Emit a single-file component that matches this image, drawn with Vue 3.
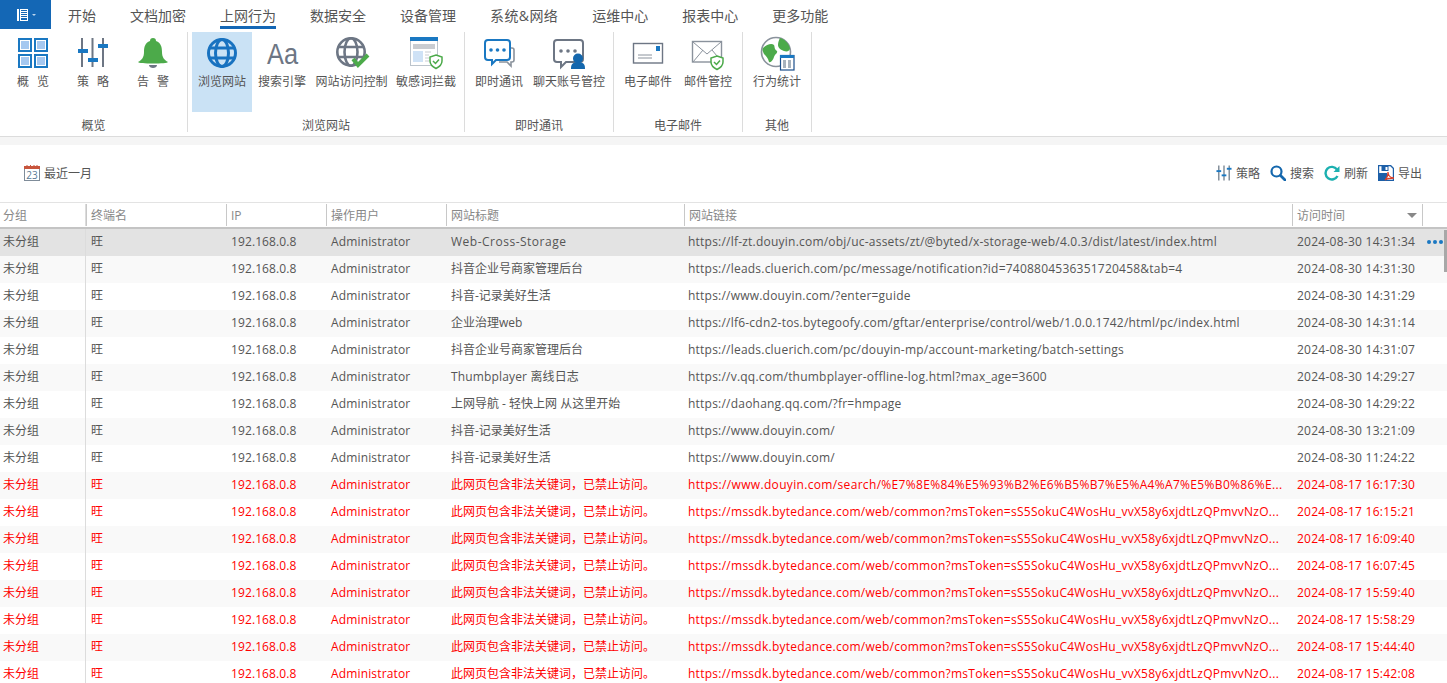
<template>
  <div class="app">
    <!-- top tabs -->
    <div class="tabs">
      <div class="file-btn">
        <svg width="14" height="14" viewBox="0 0 14 14" fill="#fff">
          <rect x="1" y="1" width="2" height="12" />
          <rect x="4.500" y="1.500" width="7" height="11" fill="none" stroke="#fff" />
          <path d="M5 3.500h6M5 5.500h6M5 7.500h6M5 9.500h6" stroke="#fff" />
        </svg>
        <span class="caret"></span>
      </div>
      <div
        v-for="t in tabs"
        :key="t"
        class="tab"
        :class="{ active: t === '上网行为', amp: t.includes('&') }"
      >
        <span>{{ t }}</span>
      </div>
    </div>

    <!-- ribbon -->
    <div class="ribbon">
      <div v-for="g in groups" :key="g.title" class="group" :style="{ width: g.width + 'px' }">
        <div class="group-items">
          <div
            v-for="it in g.items"
            :key="it.label"
            class="rb-item"
            :class="{ selected: it.selected }"
            :style="{ width: it.w + 'px' }"
          >
            <div class="rb-icon">
              <svg width="36" height="36" viewBox="0 0 36 36" overflow="visible" v-html="icons[it.icon]"></svg>
            </div>
            <div class="rb-label">{{ it.label }}</div>
          </div>
        </div>
        <div class="group-title">{{ g.title }}</div>
      </div>
    </div>
    <div class="ribbon-gap"></div>

    <!-- toolbar -->
    <div class="toolbar">
      <div class="date-range">
        <svg width="16" height="16" viewBox="0 0 16 16">
          <rect x="0.500" y="2.500" width="15" height="13" fill="#fff" stroke="#7f8c99" />
          <rect x="0" y="1" width="16" height="3" fill="#c8553d" />
          <path d="M3 0v3M6.500 0v3M10 0v3M13 0v3" stroke="#c8553d" />
          <text x="8" y="14" text-anchor="middle" class="cal-text">23</text>
        </svg>
        <span>最近一月</span>
      </div>
      <div class="actions">
        <div class="action">
          <svg width="16" height="18" viewBox="0 0 17 18" fill="#1a78c2">
            <path d="M3 1v16M8.500 1v16M14 1v16" stroke="#5c6b7a" stroke-width="1.200" />
            <rect x="0.500" y="6" width="5" height="2" /><rect x="6" y="10.500" width="5" height="2" /><rect x="11.500" y="3.500" width="5" height="2" />
          </svg>
          <span>策略</span>
        </div>
        <div class="action">
          <svg width="16" height="16" viewBox="0 0 16 16" fill="none" stroke="#1467ad" stroke-width="2.200">
            <circle cx="6.500" cy="6.500" r="5" /><path d="M10.500 10.500l4.500 4.500" stroke-linecap="round" stroke-width="2.800" />
          </svg>
          <span>搜索</span>
        </div>
        <div class="action">
          <svg width="16" height="16" viewBox="0 0 16 16" fill="none">
            <path d="M13.500 11a6.300 6.300 0 1 1 -0.500-6.500" stroke="#1cb0b0" stroke-width="2.400" />
            <path d="M15.500 1v6h-6z" fill="#1cb0b0" />
          </svg>
          <span>刷新</span>
        </div>
        <div class="action">
          <svg width="16" height="16" viewBox="0 0 16 16">
            <path d="M0.500 0.500h12l3 3v12h-15z" fill="#fff" stroke="#1c5fa8" stroke-width="1.400" />
            <rect x="3.500" y="1" width="7" height="5" fill="#1c5fa8" /><rect x="7.500" y="2" width="2" height="3" fill="#fff" />
            <rect x="1" y="8" width="8" height="7" fill="#1c5fa8" />
            <path d="M7 15c3-3 3-6 3-8 0 3 2 6 6 6-3 0-6 0-9 2z" fill="none" stroke="#d8402b" stroke-width="1.300" />
          </svg>
          <span>导出</span>
        </div>
      </div>
    </div>

    <!-- table -->
    <div class="table">
      <div class="row head">
        <div v-for="c in columns" :key="c.key" class="cell" :class="c.key" >
          <span>{{ c.label }}</span>
          <i v-if="c.key === 'time'" class="sort"></i>
        </div>
        <div class="cell extra"></div>
      </div>
      <div
        v-for="(r, i) in rows"
        :key="i"
        class="row"
        :class="{ odd: i % 2 === 1, current: i === 0, blocked: r.blocked }"
      >
        <div
          v-for="c in columns"
          :key="c.key"
          class="cell"
          :class="[c.key, cellClass(c.key, r)]"
        >{{ r[c.key] }}</div>
        <div v-if="i === 0" class="more"><b></b><b></b><b></b></div>
      </div>
      <div class="scroll-thumb"></div>
    </div>
  </div>
</template>

<script setup>
const tabs = ['开始', '文档加密', '上网行为', '数据安全', '设备管理', '系统&网络', '运维中心', '报表中心', '更多功能']

const groups = [
  {
    title: '概览', width: 188,
    items: [
      { label: '概 览', w: 60, icon: 'overview' },
      { label: '策 略', w: 60, icon: 'policy' },
      { label: '告 警', w: 60, icon: 'alarm' }
    ]
  },
  {
    title: '浏览网站', width: 277,
    items: [
      { label: '浏览网站', w: 60, icon: 'globe', selected: true },
      { label: '搜索引擎', w: 60, icon: 'font' },
      { label: '网站访问控制', w: 79, icon: 'globeCheck' },
      { label: '敏感词拦截', w: 70, icon: 'page' }
    ]
  },
  {
    title: '即时通讯', width: 149,
    items: [
      { label: '即时通讯', w: 60, icon: 'chat' },
      { label: '聊天账号管控', w: 80, icon: 'chatUser' }
    ]
  },
  {
    title: '电子邮件', width: 129,
    items: [
      { label: '电子邮件', w: 60, icon: 'mail' },
      { label: '邮件管控', w: 60, icon: 'mailShield' }
    ]
  },
  {
    title: '其他', width: 69,
    items: [{ label: '行为统计', w: 60, icon: 'earth' }]
  }
]

const shield = (x, y, c) =>
  `<path d="M${x} ${y}l6 2v4c0 4-3 6-6 7.500-3-1.500-6-3.500-6-7.500v-4z" fill="#fff" stroke="${c}" stroke-width="1.500"/><path d="M${x - 3} ${y + 6}l2.500 2.500 3.500-4" fill="none" stroke="${c}" stroke-width="1.500"/>`

const tile = (x, y) =>
  `<rect x="${x}" y="${y}" width="12" height="12" fill="#fff" stroke="#1a78c2" stroke-width="2"/><rect x="${x + 2}" y="${y + 2}" width="8" height="8" fill="#a5c8f0"/>`

const icons = {
  overview: tile(4, 3) + tile(20, 3) + tile(4, 19) + tile(20, 19),
  policy:
    '<path d="M7 2v29M17.500 2v29M28 2v29" stroke="#6d7684" stroke-width="2"/><g fill="#1a78c2"><rect x="3" y="13" width="10" height="4"/><rect x="13" y="22" width="10" height="4"/><rect x="23" y="8" width="10" height="4"/></g>',
  alarm:
    '<path d="M18 2c2 0 3 1 3 3 5 2 6 6 6 11 0 5 2 8 6 10 0 2-30 2-30 0 4-2 6-5 6-10 0-5 1-9 6-11 0-2 1-3 3-3z" fill="#4caa4a"/><path d="M14 29h8c0 4-8 4-8 0z" fill="#6d7684"/>',
  globe:
    '<g fill="none" stroke="#1872c0" stroke-width="3"><circle cx="18" cy="17" r="13.500"/><ellipse cx="18" cy="17" rx="6.500" ry="13.500"/><path d="M5 12h26M5 22h26"/></g>',
  font:
    '<text x="3" y="28" font-size="29" textLength="31" lengthAdjust="spacingAndGlyphs" fill="#6d7684" font-family="Liberation Sans, sans-serif">Aa</text>',
  globeCheck:
    '<g fill="none" stroke="#6d7684" stroke-width="2.600"><circle cx="17" cy="16" r="13.700"/><ellipse cx="17" cy="16" rx="6.500" ry="13.700"/><path d="M4 11h26M4 21h26"/></g><path d="M19 23l5 6 10-10" fill="none" stroke="#4caa4a" stroke-width="4"/>',
  page:
    '<rect x="2.500" y="1.500" width="27" height="28" fill="#fff" stroke="#bcc4cc"/><rect x="2" y="1" width="28" height="4" fill="#1a78c2"/><rect x="5" y="8" width="22" height="5" fill="#c9ccd1"/><rect x="5" y="15" width="10" height="11" fill="#cfe2f6"/><path d="M17 16h6M17 19h4M17 22h4M17 25h4" stroke="#c9ccd1"/>' + shield(28, 19, '#4caa4a'),
  chat:
    '<path d="M7 4h19a3 3 0 0 1 3 3v14a3 3 0 0 1-3 3H15l-4 4v-4H7a3 3 0 0 1-3-3V7a3 3 0 0 1 3-3z" fill="#fff" stroke="#1a78c2" stroke-width="2"/><path d="M30 12h1a2 2 0 0 1 2 2v10a2 2 0 0 1-2 2h-1v4l-4-4h-8" fill="none" stroke="#8a929c" stroke-width="1.600"/><g fill="#1a78c2"><circle cx="10" cy="14" r="1.800"/><circle cx="16.500" cy="14" r="1.800"/><circle cx="23" cy="14" r="1.800"/></g>',
  chatUser:
    '<path d="M6 4h23a3 3 0 0 1 3 3v16a3 3 0 0 1-3 3H15l-5 5v-5H6a3 3 0 0 1-3-3V7a3 3 0 0 1 3-3z" fill="#fff" stroke="#6d7684" stroke-width="2"/><g fill="#6d7684"><circle cx="10" cy="15" r="1.800"/><circle cx="17" cy="15" r="1.800"/><circle cx="24" cy="15" r="1.800"/></g><circle cx="27" cy="22.500" r="5" fill="#1467ad"/><path d="M20 33c0-4 1-6 4-6.500h6c3 .5 4 2.500 4 6.500z" fill="#1467ad"/>',
  mail:
    '<rect x="3.500" y="7.500" width="29" height="19.500" fill="#fff" stroke="#6d7684" stroke-width="1.400"/><rect x="26" y="10" width="4" height="5" fill="#1a78c2"/><path d="M8 19h14M8 22h14" stroke="#8a929c"/>',
  mailShield:
    '<rect x="2.500" y="5.500" width="29" height="20.500" fill="#fff" stroke="#8a929c" stroke-width="1.400"/><path d="M3 6l14 12 14-12M3 26l10-12M32 26l-10-12" fill="none" stroke="#8a929c"/>' + shield(27, 20, '#4caa4a'),
  earth:
    '<circle cx="17" cy="16" r="14.500" fill="#fff" stroke="#8a929c" stroke-width="1.600"/><path d="M4 12c4-4 9-5 11-3 1 2 0 4 3 6 1 2-2 3-3 6-1 3-3 6-5 5-1-4-3-6-5-8-1-2-2-4-1-6zM21 2c4 1 8 4 10 10 0 3-3 4-6 3-3-1-6-3-6-6 0-3 1-5 2-7z" fill="#4caa4a"/><rect x="21.500" y="19.500" width="13.500" height="14.500" fill="#fff" stroke="#1a4e8a" stroke-width="1.200"/><rect x="21" y="19" width="14" height="3" fill="#1a78c2"/><path d="M24 24v8h3v-8zM29 24v8h3v-8z" fill="#a7b2bd"/>'
}

const columns = [
  { key: 'group', label: '分组' },
  { key: 'term', label: '终端名' },
  { key: 'ip', label: 'IP' },
  { key: 'user', label: '操作用户' },
  { key: 'title', label: '网站标题' },
  { key: 'url', label: '网站链接' },
  { key: 'time', label: '访问时间' }
]

const base = { group: '未分组', term: '旺', ip: '192.168.0.8', user: 'Administrator' }
const blockedTitle = '此网页包含非法关键词，已禁止访问。'
const sdkUrl = 'https://mssdk.bytedance.com/web/common?msToken=sS5SokuC4WosHu_vvX58y6xjdtLzQPmvvNzO...'

const rows = [
  ['Web-Cross-Storage', 'https://lf-zt.douyin.com/obj/uc-assets/zt/@byted/x-storage-web/4.0.3/dist/latest/index.html', '2024-08-30 14:31:34'],
  ['抖音企业号商家管理后台', 'https://leads.cluerich.com/pc/message/notification?id=7408804536351720458&tab=4', '2024-08-30 14:31:30'],
  ['抖音-记录美好生活', 'https://www.douyin.com/?enter=guide', '2024-08-30 14:31:29'],
  ['企业治理web', 'https://lf6-cdn2-tos.bytegoofy.com/gftar/enterprise/control/web/1.0.0.1742/html/pc/index.html', '2024-08-30 14:31:14'],
  ['抖音企业号商家管理后台', 'https://leads.cluerich.com/pc/douyin-mp/account-marketing/batch-settings', '2024-08-30 14:31:07'],
  ['Thumbplayer 离线日志', 'https://v.qq.com/thumbplayer-offline-log.html?max_age=3600', '2024-08-30 14:29:27'],
  ['上网导航 - 轻快上网 从这里开始', 'https://daohang.qq.com/?fr=hmpage', '2024-08-30 14:29:22'],
  ['抖音-记录美好生活', 'https://www.douyin.com/', '2024-08-30 13:21:09'],
  ['抖音-记录美好生活', 'https://www.douyin.com/', '2024-08-30 11:24:22'],
  [blockedTitle, 'https://www.douyin.com/search/%E7%8E%84%E5%93%B2%E6%B5%B7%E5%A4%A7%E5%B0%86%E...', '2024-08-17 16:17:30', true],
  [blockedTitle, sdkUrl, '2024-08-17 16:15:21', true],
  [blockedTitle, sdkUrl, '2024-08-17 16:09:40', true],
  [blockedTitle, sdkUrl, '2024-08-17 16:07:45', true],
  [blockedTitle, sdkUrl, '2024-08-17 15:59:40', true],
  [blockedTitle, sdkUrl, '2024-08-17 15:58:29', true],
  [blockedTitle, sdkUrl, '2024-08-17 15:44:40', true],
  [blockedTitle, sdkUrl, '2024-08-17 15:42:08', true]
].map(([title, url, time, blocked]) => ({ ...base, title, url, time, blocked }))

// small spacing tweaks for the latin strings, depending on what the cell holds
const cellClass = (key, r) => {
  if (key === 'title' && r.title === 'Web-Cross-Storage') return 'latin'
  if (key === 'title' && r.title.startsWith('Thumbplayer')) return 'mixed'
  if (key === 'url' && r.blocked) return r.url.includes('%') ? 'encoded' : 'long'
  return ''
}
</script>

<style scoped>
.app {
  height: 683px;
  overflow: hidden;
  background: #fff;
  font-family: "Open Sans", "Noto Sans CJK SC", sans-serif;
  font-size: 12px;
  color: #555;
}

.tabs {
  display: flex;
  height: 29px;
  align-items: stretch;
}

.file-btn {
  width: 51px;
  background: #1467b5;
  display: flex;
  align-items: center;
  justify-content: center;
  gap: 2px;
}

.caret {
  border: 2px solid transparent;
  border-top: 2px solid #bcd6ee;
  margin-top: 2px;
}

.tab {
  margin-left: 17px;
  margin-right: 17px;
  font-size: 14px;
  color: #555;
  line-height: 32px;
  box-sizing: border-box;
  border-bottom: 3px solid transparent;
}

.tab.amp {
  letter-spacing: 0.4px;
}

.tab.active {
  border-bottom-color: #1467b5;
}

.ribbon {
  display: flex;
  height: 104px;
  border-bottom: 1px solid #dcdcdc;
  padding-top: 3px;
}

.group {
  box-sizing: border-box;
  border-right: 1px solid #dcdcdc;
  display: flex;
  flex-direction: column;
  height: 100px;
}

.group-items {
  display: flex;
  height: 80px;
  padding-left: 4px;
}

.group:first-child .group-items {
  padding-left: 3px;
}

.rb-item {
  height: 80px;
  display: flex;
  flex-direction: column;
  align-items: center;
  flex: none;
}

.rb-item.selected {
  background: #cae2f5;
}

.rb-icon {
  height: 36px;
  margin-top: 4px;
}

.rb-label {
  margin-top: 2px;
  white-space: nowrap;
  word-spacing: 5px;
  color: #555;
  line-height: 16px;
}

.group-title {
  text-align: center;
  line-height: 16px;
  margin-top: 6px;
  color: #555;
}

.ribbon-gap {
  height: 8px;
  background: #f5f5f5;
}

.toolbar {
  height: 57px;
  box-sizing: border-box;
  padding: 0 25px 2px 24px;
  display: flex;
  align-items: center;
  justify-content: space-between;
}

.date-range {
  display: flex;
  align-items: center;
  gap: 4px;
}

.actions {
  display: flex;
  gap: 10px;
}

.action {
  display: flex;
  align-items: center;
  gap: 4px;
}

.table {
  position: relative;
  border-top: 1px solid #e3e3e3;
}

.row {
  display: flex;
  height: 27px;
  line-height: 26px;
  position: relative;
}

.row.odd {
  background: #f9f9f9;
}

.row.current {
  background: #e3e3e3;
}

.row.blocked {
  color: #f00;
}

.row.head {
  height: 24px;
  color: #888;
  border-bottom: 2px solid #c4c4c4;
  background: #fff;
}

.cell {
  flex: none;
  box-sizing: border-box;
  padding-left: 5px;
  white-space: nowrap;
  overflow: hidden;
}

.cell.group { width: 86px; padding-left: 3px; }
.cell.term { width: 140px; }
.cell.ip { width: 100px; letter-spacing: 0.1px; }
.cell.user { width: 120px; letter-spacing: 0.15px; }
.cell.title { width: 238px; }
.cell.title.latin { letter-spacing: 0.5px; }
.cell.title.mixed { letter-spacing: 0.15px; }
.cell.url { width: 608px; padding-left: 4px; letter-spacing: 0.22px; }
.cell.url.long { letter-spacing: 0.26px; }
.cell.url.encoded { letter-spacing: 0.33px; }
.cell.time { width: 130px; position: relative; letter-spacing: 0.26px; }
.cell.extra { width: 1px; }

.head .cell {
  border-left: 1px solid #c8c8c8;
  margin-top: 1px;
  padding-left: 4px;
  line-height: 24px;
  height: 22px;
  letter-spacing: 0;
}

.head .cell.group {
  border-left: none;
  padding-left: 3px;
}

.sort {
  position: absolute;
  right: 5px;
  top: 9px;
  border: 5px solid transparent;
  border-top: 5px solid #888;
  border-bottom: none;
}

.more {
  position: absolute;
  left: 1427px;
  top: 11px;
  display: flex;
  gap: 2px;
}

.more b {
  width: 4px;
  height: 4px;
  border-radius: 50%;
  background: #1a78c2;
}

.scroll-thumb {
  position: absolute;
  right: 0;
  top: 27px;
  width: 3px;
  height: 42px;
  background: #a8a8a8;
}

.cal-text {
  font-size: 10px;
  fill: #5a7a96;
}
</style>

<style>
html,
body {
  margin: 0;
  overflow: hidden;
}
</style>
